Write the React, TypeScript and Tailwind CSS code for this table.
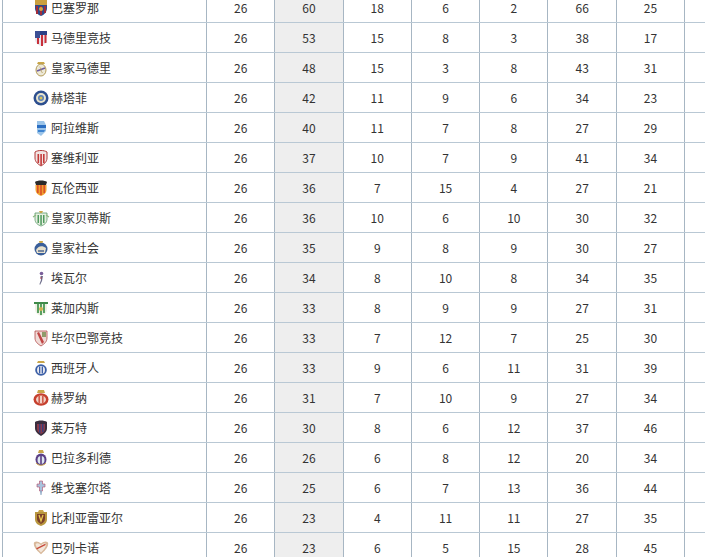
import React from "react";

type Team = {
  name: string;
  crest: CrestKind;
  stats: number[];
};

type CrestKind =
  | "barca" | "atleti" | "real" | "getafe" | "alaves" | "sevilla" | "valencia" | "betis"
  | "sociedad" | "eibar" | "leganes" | "athletic" | "espanyol" | "girona" | "levante"
  | "valladolid" | "celta" | "villarreal" | "rayo";

const teams: Team[] = [
  { name: "巴塞罗那", crest: "barca", stats: [26, 60, 18, 6, 2, 66, 25] },
  { name: "马德里竞技", crest: "atleti", stats: [26, 53, 15, 8, 3, 38, 17] },
  { name: "皇家马德里", crest: "real", stats: [26, 48, 15, 3, 8, 43, 31] },
  { name: "赫塔菲", crest: "getafe", stats: [26, 42, 11, 9, 6, 34, 23] },
  { name: "阿拉维斯", crest: "alaves", stats: [26, 40, 11, 7, 8, 27, 29] },
  { name: "塞维利亚", crest: "sevilla", stats: [26, 37, 10, 7, 9, 41, 34] },
  { name: "瓦伦西亚", crest: "valencia", stats: [26, 36, 7, 15, 4, 27, 21] },
  { name: "皇家贝蒂斯", crest: "betis", stats: [26, 36, 10, 6, 10, 30, 32] },
  { name: "皇家社会", crest: "sociedad", stats: [26, 35, 9, 8, 9, 30, 27] },
  { name: "埃瓦尔", crest: "eibar", stats: [26, 34, 8, 10, 8, 34, 35] },
  { name: "莱加内斯", crest: "leganes", stats: [26, 33, 8, 9, 9, 27, 31] },
  { name: "毕尔巴鄂竞技", crest: "athletic", stats: [26, 33, 7, 12, 7, 25, 30] },
  { name: "西班牙人", crest: "espanyol", stats: [26, 33, 9, 6, 11, 31, 39] },
  { name: "赫罗纳", crest: "girona", stats: [26, 31, 7, 10, 9, 27, 34] },
  { name: "莱万特", crest: "levante", stats: [26, 30, 8, 6, 12, 37, 46] },
  { name: "巴拉多利德", crest: "valladolid", stats: [26, 26, 6, 8, 12, 20, 34] },
  { name: "维戈塞尔塔", crest: "celta", stats: [26, 25, 6, 7, 13, 36, 44] },
  { name: "比利亚雷亚尔", crest: "villarreal", stats: [26, 23, 4, 11, 11, 27, 35] },
  { name: "巴列卡诺", crest: "rayo", stats: [26, 23, 6, 5, 15, 28, 45] },
];

const SHIELD = "M2 2 H14 V9 C14 13 11 15 8 16 C5 15 2 13 2 9 Z";

function Crest({ kind }: { kind: CrestKind }) {
  // tiny club badges, drawn loosely
  switch (kind) {
    case "barca":
      return (
        <svg width="16" height="18" viewBox="0 0 16 18">
          <path d="M2 1 H14 V9 C14 13 11 16 8 17 C5 16 2 13 2 9 Z" fill="#2d4a8a" />
          <rect x="2" y="1" width="12" height="5" fill="#c9a040" />
          <rect x="3" y="7" width="2" height="8" fill="#a12c3a" />
          <rect x="7" y="7" width="2" height="9" fill="#a12c3a" />
          <rect x="11" y="7" width="2" height="7" fill="#a12c3a" />
          <circle cx="8" cy="10" r="2" fill="#d9a640" />
        </svg>
      );
    case "atleti":
      return (
        <svg width="16" height="18" viewBox="0 0 16 18">
          <path d="M2 2 H14 V10 C14 14 11 16 8 17 C5 16 2 14 2 10 Z" fill="#e9e3ea" />
          <path d="M2 2 H14 V6 H2 Z" fill="#293f85" />
          <rect x="4" y="6" width="2" height="9" fill="#c8303a" />
          <rect x="8" y="6" width="2" height="11" fill="#c8303a" />
          <rect x="11.5" y="6" width="2" height="8" fill="#c8303a" />
          <path d="M2 2 H7 V9 H2 Z" fill="#3b4f94" />
        </svg>
      );
    case "real":
      return (
        <svg width="16" height="18" viewBox="0 0 16 18">
          <path d="M5 3 H11 L12 5 H4 Z" fill="#c9a64a" />
          <ellipse cx="8" cy="11" rx="5" ry="6" fill="#ece8d8" stroke="#b39a55" strokeWidth="1" />
          <path d="M4 12 L12 9" stroke="#6a5aa0" strokeWidth="1.6" />
          <path d="M6.5 8 C9 9 7 12 9.5 14" stroke="#b39a55" strokeWidth="0.8" fill="none" />
        </svg>
      );
    case "getafe":
      return (
        <svg width="18" height="18" viewBox="0 0 18 18">
          <circle cx="9" cy="9" r="7.5" fill="#2d4f8f" />
          <circle cx="9" cy="9" r="5" fill="#e9e5cf" />
          <circle cx="9" cy="9" r="3" fill="#5a7fb8" />
          <circle cx="9" cy="9" r="1.5" fill="#d8c35a" />
        </svg>
      );
    case "alaves":
      return (
        <svg width="16" height="18" viewBox="0 0 16 18">
          <path d="M4 2 H11 L13 6 V12 L8 17 L4 14 Z" fill="#9cc4e8" />
          <path d="M4 6 H13 V9 H4 Z" fill="#2a6ec2" />
          <path d="M5 11 H12 L11 13 H5 Z" fill="#3d83d0" />
        </svg>
      );
    case "sevilla":
      return (
        <svg width="16" height="18" viewBox="0 0 16 18">
          <path d="M2 3 C5 1 11 1 14 3 V9 C14 13 11 15 8 17 C5 15 2 13 2 9 Z" fill="#f1e5e3" stroke="#b23a3a" strokeWidth="1" />
          <rect x="4.5" y="5" width="1.6" height="9" fill="#c43a3a" />
          <rect x="7.3" y="5" width="1.6" height="11" fill="#c43a3a" />
          <rect x="10" y="5" width="1.6" height="9" fill="#c43a3a" />
        </svg>
      );
    case "valencia":
      return (
        <svg width="16" height="18" viewBox="0 0 16 18">
          <path d="M2 3 C4 1 12 1 14 3 L13 6 H3 Z" fill="#2b2b2b" />
          <path d="M2.5 6 H13.5 V11 C13.5 14 11 16 8 17 C5 16 2.5 14 2.5 11 Z" fill="#f0a030" />
          <rect x="4" y="6" width="1.6" height="8" fill="#d9502a" />
          <rect x="7.2" y="6" width="1.6" height="10" fill="#d9502a" />
          <rect x="10.4" y="6" width="1.6" height="8" fill="#d9502a" />
        </svg>
      );
    case "betis":
      return (
        <svg width="18" height="18" viewBox="0 0 18 18">
          <path d="M3 4 H15 V10 C15 14 12 16 9 17 C6 16 3 14 3 10 Z" fill="#e6efe0" stroke="#5c9a6a" strokeWidth="0.8" />
          <rect x="5.5" y="6" width="1.5" height="8" fill="#4f9a5e" />
          <rect x="8.3" y="6" width="1.5" height="10" fill="#4f9a5e" />
          <rect x="11" y="6" width="1.5" height="8" fill="#4f9a5e" />
          <path d="M1 8 L4 6 M17 8 L14 6" stroke="#8fb87e" strokeWidth="1.2" />
          <path d="M7 2 H11 L10 4 H8 Z" fill="#c9a64a" />
        </svg>
      );
    case "sociedad":
      return (
        <svg width="16" height="18" viewBox="0 0 16 18">
          <circle cx="8" cy="10" r="6.5" fill="#3a5f9a" />
          <path d="M3 11 C5 7 9 6 13 9 L12 14 H4 Z" fill="#e8e1cc" />
          <path d="M5 12 L11 12" stroke="#2a4a80" strokeWidth="1.2" />
          <path d="M6 2 H10 L9.5 4 H6.5 Z" fill="#c9a64a" />
        </svg>
      );
    case "eibar":
      return (
        <svg width="16" height="18" viewBox="0 0 16 18">
          <circle cx="8.5" cy="4.5" r="1.8" fill="#7a5f9b" />
          <path d="M7.5 7 L10 7 L9 12 L7 16 L6.5 15 L8 11 Z" fill="#6d6d8a" />
          <circle cx="8" cy="9" r="0.8" fill="#b33a4a" />
        </svg>
      );
    case "leganes":
      return (
        <svg width="18" height="18" viewBox="0 0 18 18">
          <path d="M2 3 H16 V5 H2 Z" fill="#3f8a4a" />
          <path d="M3 5 H15 V10 C15 14 12 16 9 17 C6 16 3 14 3 10 Z" fill="#eef0e4" />
          <rect x="5" y="5" width="2" height="9" fill="#5aa061" />
          <rect x="8" y="5" width="2" height="11" fill="#5aa061" />
          <rect x="11" y="5" width="2" height="9" fill="#5aa061" />
          <circle cx="9" cy="10" r="2" fill="#d1b050" />
        </svg>
      );
    case "athletic":
      return (
        <svg width="16" height="18" viewBox="0 0 16 18">
          <path d="M2 2 H14 V9 C14 13 11 15 8 17 C5 15 2 13 2 9 Z" fill="#f0dad6" stroke="#b04a4a" strokeWidth="0.8" />
          <path d="M4 4 L9 15 L11 13 L6 3 Z" fill="#c04545" />
          <rect x="9" y="3" width="4" height="5" fill="#8f9b6a" />
        </svg>
      );
    case "espanyol":
      return (
        <svg width="16" height="18" viewBox="0 0 16 18">
          <path d="M5 2 H11 L12 4 H4 Z" fill="#c9a64a" />
          <circle cx="8" cy="11" r="5.8" fill="#3b5fa6" />
          <circle cx="8" cy="11" r="4" fill="#e7e7ee" />
          <rect x="6" y="7.5" width="1.3" height="7" fill="#3b5fa6" />
          <rect x="8.7" y="7.5" width="1.3" height="7" fill="#3b5fa6" />
        </svg>
      );
    case "girona":
      return (
        <svg width="18" height="18" viewBox="0 0 18 18">
          <path d="M6 1 H12 L13 4 H5 Z" fill="#c9a64a" />
          <ellipse cx="9" cy="10.5" rx="7.5" ry="6.2" fill="#c6402e" />
          <ellipse cx="9" cy="10.5" rx="5" ry="4" fill="#f3d2c7" />
          <rect x="6.5" y="7" width="1.3" height="7" fill="#c6402e" />
          <rect x="10.2" y="7" width="1.3" height="7" fill="#c6402e" />
        </svg>
      );
    case "levante":
      return (
        <svg width="16" height="18" viewBox="0 0 16 18">
          <path d="M2 3 C5 1 11 1 14 3 V9 C14 13 11 15 8 17 C5 15 2 13 2 9 Z" fill="#3a2e3e" />
          <path d="M4 5 H12 V10 C12 12 10 14 8 15 C6 14 4 12 4 10 Z" fill="#8a3a4a" />
          <rect x="6" y="5" width="1.5" height="9" fill="#3a3f7a" />
          <rect x="9" y="5" width="1.5" height="8" fill="#3a3f7a" />
        </svg>
      );
    case "valladolid":
      return (
        <svg width="16" height="18" viewBox="0 0 16 18">
          <path d="M6 1 H10 L11 4 H5 Z" fill="#c9a64a" />
          <ellipse cx="8" cy="10.5" rx="5.5" ry="6" fill="#5b3f86" />
          <ellipse cx="8" cy="11" rx="3.5" ry="4" fill="#dde7f0" />
          <rect x="7.2" y="7" width="1.6" height="8" fill="#5b3f86" />
          <path d="M3 14 C5 17 11 17 13 14" stroke="#d4b050" strokeWidth="1" fill="none" />
        </svg>
      );
    case "celta":
      return (
        <svg width="16" height="18" viewBox="0 0 16 18">
          <path d="M6.5 2 H9.5 V5 H12 V8 H9.5 V12 H6.5 V8 H4 V5 H6.5 Z" fill="#a9c4de" stroke="#b04a6a" strokeWidth="0.6" />
          <path d="M7 12 L9 12 L8.5 16 L7.5 16 Z" fill="#8fa9c5" />
        </svg>
      );
    case "villarreal":
      return (
        <svg width="16" height="18" viewBox="0 0 16 18">
          <path d="M6 1 H10 L11 3 H5 Z" fill="#c9a64a" />
          <path d="M2 3 H14 V10 C14 14 11 16 8 17 C5 16 2 14 2 10 Z" fill="#b8963e" />
          <path d="M4 5 H12 V10 C12 12 10 14 8 15 C6 14 4 12 4 10 Z" fill="#7a3f2a" />
          <path d="M6 6 L8 12 L10 6" stroke="#e8c850" strokeWidth="1.3" fill="none" />
        </svg>
      );
    case "rayo":
      return (
        <svg width="20" height="18" viewBox="0 0 20 18">
          <path d="M2 4 C2 1 7 1 10 4 C13 1 18 1 18 4 C18 9 13 13 10 16 C7 13 2 9 2 4 Z" fill="#d8b89a" />
          <path d="M4 5 C5 3 8 3 10 6 C12 3 15 3 16 5 C15 9 12 12 10 14 C8 12 5 9 4 5 Z" fill="#f2e6da" />
          <path d="M5 10 L15 5" stroke="#c74a3a" strokeWidth="1.6" />
        </svg>
      );
  }
  return <svg width="16" height="18" viewBox="0 0 16 18"><path d={SHIELD} fill="#999" /></svg>;
}

export default function App() {
  return (
    <div className="h-[557px] w-[705px] overflow-hidden bg-white pl-[2px]" style={{ fontFamily: '"Noto Sans CJK SC", "Noto Sans", sans-serif' }}>
      <div className="-mt-[7px]">
        {teams.map((t) => (
          <div key={t.name} className="flex h-[30px] border-b border-[#b9c8d4] text-[12px] text-[#333]">
            <div className="flex w-[205px] shrink-0 items-center border-l border-r border-[#a7b6c3] pl-[29px]">
              <span className="flex w-[18px] justify-center">
                <Crest kind={t.crest} />
              </span>
              <span className="ml-[1px]">{t.name}</span>
            </div>
            {t.stats.map((s, i) => (
              <div
                key={i}
                className={
                  i === 1
                    ? "flex w-[68.3px] shrink-0 items-center justify-center border-r border-[#a7b6c3] bg-[#eeeeee]"
                    : "flex w-[68.3px] shrink-0 items-center justify-center border-r border-[#a7b6c3]"
                }
              >
                {s}
              </div>
            ))}
            <div className="w-[60px] shrink-0" />
          </div>
        ))}
      </div>
    </div>
  );
}
